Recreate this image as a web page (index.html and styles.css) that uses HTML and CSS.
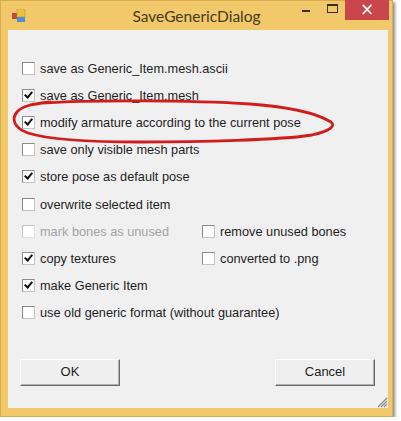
FILE: index.html
```html
<!DOCTYPE html>
<html>
<head>
<meta charset="utf-8">
<link rel="stylesheet" href="styles.css">
</head>
<body>
<div class="window">
  <div class="titlebar">
    <div class="tb-left">
      <svg class="appicon" width="14" height="14" viewBox="0 0 14 14">
        <rect x="0" y="4" width="6" height="6" fill="#c8463f"/>
        <rect x="5" y="0" width="8" height="8" fill="#e8c43c" stroke="#b89a28" stroke-width="0.6"/>
        <rect x="5" y="8" width="8" height="5" fill="#4f8ed8"/>
      </svg>
    </div>
    <div class="title">SaveGenericDialog</div>
    <div class="controls">
      <span class="ctl min"><span class="minbar"></span></span>
      <span class="ctl max"><span class="maxbox"></span></span>
      <span class="close">×</span>
    </div>
  </div>
  <div class="client">
    <div class="options">
      <label class="row"><span class="box"></span>save as Generic_Item.mesh.ascii</label>
      <label class="row"><span class="box checked"></span>save as Generic_Item.mesh</label>
      <label class="row"><span class="box checked"></span>modify armature according to the current pose</label>
      <label class="row"><span class="box"></span>save only visible mesh parts</label>
      <label class="row"><span class="box checked"></span>store pose as default pose</label>
      <label class="row"><span class="box"></span>overwrite selected item</label>
      <div class="pair">
        <label class="row disabled"><span class="box"></span>mark bones as unused</label>
        <label class="row"><span class="box"></span>remove unused bones</label>
      </div>
      <div class="pair">
        <label class="row"><span class="box checked"></span>copy textures</label>
        <label class="row"><span class="box"></span>converted to .png</label>
      </div>
      <label class="row"><span class="box checked"></span>make Generic Item</label>
      <label class="row"><span class="box"></span>use old generic format (without guarantee)</label>
    </div>
    <div class="buttons">
      <button class="btn">OK</button>
      <button class="btn">Cancel</button>
    </div>
    <svg class="grip" width="12" height="12" viewBox="0 0 12 12">
      <path d="M11 2 L2 11 M11 5 L5 11 M11 8 L8 11" stroke="#8a8a8a" stroke-width="1.2"/>
    </svg>
  </div>
  <svg class="annot" width="401" height="421" viewBox="0 0 401 421">
    <path d="M42 103 C 90 100, 190 100, 250 104 C 290 107, 318 114, 331 122 C 336 126, 330 131, 312 135 C 280 140, 200 142, 140 142 C 90 142, 50 140, 28 133 C 14 128, 11 119, 17 112 C 22 106, 32 104, 50 102" fill="none" stroke="#d21c1c" stroke-width="2.8" stroke-linecap="round"/>
  </svg>
</div>
</body>
</html>
```

FILE: styles.css
```css
html, body {
  margin: 0;
  padding: 0;
  background: #ffffff;
}

.window {
  position: relative;
  width: 393px;
  height: 417px;
  box-sizing: border-box;
  background: #f1c96b;
  border: 1px solid #d9ab4c;
  box-shadow: 2px 2px 3px rgba(0, 0, 0, 0.45);
  display: flex;
  flex-direction: column;
  font-family: "Liberation Sans", Arial, sans-serif;
}

.titlebar {
  height: 29px;
  display: grid;
  grid-template-columns: 1fr auto 1fr;
  align-items: start;
}

.tb-left {
  padding: 8px 0 0 11px;
}

.appicon {
  display: block;
}

.title {
  font-family: Lato, "Noto Sans", sans-serif;
  font-size: 15.5px;
  color: #47391a;
  padding-top: 6px;
}

.controls {
  display: flex;
  justify-content: flex-end;
  align-items: flex-start;
  margin-top: -1px;
  margin-right: 3px;
}

.ctl {
  width: 26px;
  height: 20px;
  display: flex;
  align-items: center;
  justify-content: center;
}

.minbar {
  width: 8px;
  height: 2px;
  background: #3a3020;
  margin-top: 2px;
}

.maxbox {
  width: 9px;
  height: 6px;
  border: 1px solid #3a3020;
  border-top-width: 2px;
  margin-top: -3px;
}

.close {
  width: 44px;
  height: 20px;
  background: #c9474a;
  color: #ffffff;
  font-size: 17px;
  line-height: 19px;
  text-align: center;
  font-family: "DejaVu Sans", sans-serif;
}

.client {
  position: relative;
  flex: 1;
  margin: 0 4px 8px 7px;
  background: #f0f0f0;
  display: flex;
  flex-direction: column;
}

.options {
  display: flex;
  flex-direction: column;
  padding: 25px 0 0 14px;
}

.row {
  height: 27.1px;
  display: flex;
  align-items: center;
  font-size: 12.75px;
  color: #1e1e1e;
}

.row.disabled {
  color: #a3a3a3;
}

.pair {
  display: grid;
  grid-template-columns: 180px 1fr;
}

.box {
  position: relative;
  width: 11px;
  height: 11px;
  background: #ffffff;
  border: 1px solid #8c8c8c;
  border-right-color: #c4c4c4;
  border-bottom-color: #c4c4c4;
  margin-right: 5px;
  flex: none;
}

.disabled .box {
  border-color: #c6c6c6;
  border-right-color: #e0e0e0;
  border-bottom-color: #e0e0e0;
}

.box.checked::after {
  content: "";
  position: absolute;
  left: 3px;
  top: 0px;
  width: 3px;
  height: 6px;
  border-right: 2px solid #111;
  border-bottom: 2px solid #111;
  transform: rotate(40deg);
}

.buttons {
  display: flex;
  justify-content: space-between;
  padding: 33px 13px 0 12px;
}

.btn {
  width: 100px;
  height: 27px;
  font-family: "Liberation Sans", Arial, sans-serif;
  font-size: 13px;
  color: #1e1e1e;
  background: #efefef;
  border: 1px solid;
  border-color: #ffffff #6a6a6a #6a6a6a #ffffff;
  box-shadow: inset -1px -1px 0 #b0b0b0;
  padding: 0 0 2px 0;
}

.grip {
  position: absolute;
  right: 0;
  bottom: 0;
}

.annot {
  position: absolute;
  left: -1px;
  top: -1px;
  pointer-events: none;
}
```
